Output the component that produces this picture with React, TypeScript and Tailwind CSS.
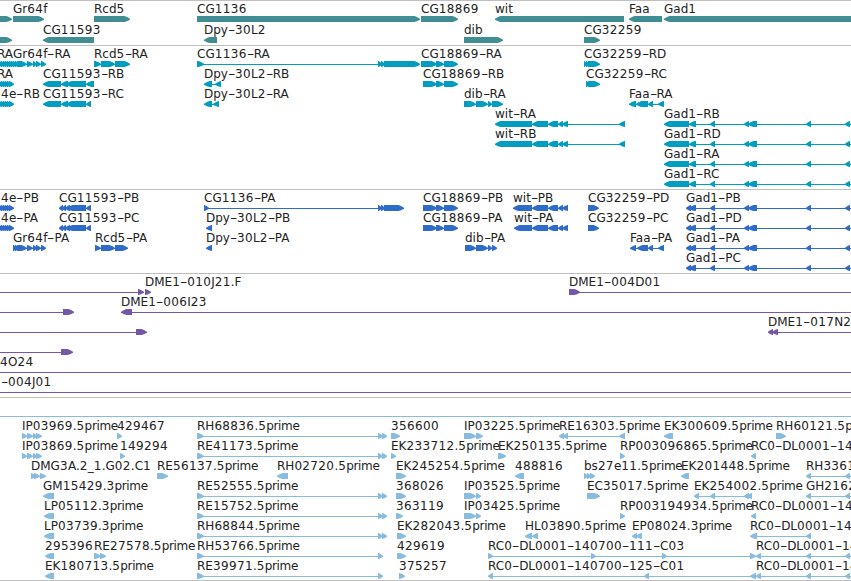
import React from 'react'

// label, x, direction, blocks as [start, end] (joined by a thin line), no line when solo
type Feature = {
  t?: string
  x?: number
  d?: 'r' | 'l'
  b?: number[][]
  line?: number[]
}

const END = [870, 880]
const head = [[-3, 1], [-1, 3], [1, 5], [3, 7], [5, 9], [7, 11], [9, 14]]
const gr64f = [[13, 17], [15, 19], [17, 21], [18, 27], [27, 33], [33, 37], [36, 41], [41, 46]]
const cg18869 = [[423, 437], [436, 444], [444, 447], [445, 458]]
const wit = [[532, 548], [548, 558], [558, 563], [562, 568]]
const gad = [[689, 696], [710, 715], [744, 749], [748, 757], [806, 811], [845, 850], END]
const tail = [[806, 811], [845, 850], END]
const prime = [[197, 204], [378, 383], [382, 387]]

const r = (t: string, x: number, b: number[][]): Feature => ({ t, x, d: 'r', b })
const l = (t: string, x: number, b: number[][]): Feature => ({ t, x, d: 'l', b })

const genes: Feature[][] = [
  [
    r('', 0, [[-10, 12]]), r('Gr64f', 13, [[13, 44]]), r('Rcd5', 94, [[94, 130]]), r('CG1136', 197, [[197, 420]]),
    r('CG18869', 421, [[421, 458]]), l('wit', 495, [[495, 624]]), l('Faa', 629, [[629, 662]]), l('Gad1', 664, [[664, 870]]),
  ],
  [
    r('', 0, [[-10, 12]]), l('CG11593', 43, [[43, 94]]), l('Dpy-30L2', 204, [[204, 217]]),
    r('dib', 464, [[464, 503]]), r('CG32259', 584, [[584, 600]]),
  ],
]

const transcripts: Feature[][] = [
  [
    r('RA', -3, [...head, [11, 15]]), r('Gr64f-RA', 13, gr64f), r('Rcd5-RA', 94, [[94, 101], [101, 115], [115, 130]]),
    r('CG1136-RA', 197, [[197, 204], [378, 382], [381, 385], [384, 420]]),
    r('CG18869-RA', 421, [[421, 437], [436, 444], [444, 447], [445, 458]]),
    r('CG32259-RD', 584, [[584, 587], [586, 590], [588, 600]]),
  ],
  [
    r('RA', -3, head), l('CG11593-RB', 43, [[43, 61], [61, 68], [66, 86], [86, 94]]),
    l('Dpy-30L2-RB', 204, [[204, 212], [215, 221]]), r('CG18869-RB', 423, cg18869),
    r('CG32259-RC', 586, [[586, 590], [588, 600]]),
  ],
  [
    r('4e-RB', 1, head), l('CG11593-RC', 43, [[43, 61], [61, 68], [66, 86], [86, 91]]),
    l('Dpy-30L2-RA', 204, [[204, 212], [213, 219]]),
    r('dib-RA', 464, [[464, 476], [476, 488], [488, 492], [492, 503]]),
    l('Faa-RA', 629, [[629, 636], [636, 648], [648, 653], [658, 664]]),
  ],
  [l('wit-RA', 495, [[495, 532], ...wit, [619, 625]]), l('Gad1-RB', 664, [[664, 689], ...gad])],
  [l('wit-RB', 495, [[495, 532], ...wit, [619, 625]]), l('Gad1-RD', 664, [[664, 689], ...gad])],
  [l('Gad1-RA', 664, [[664, 689], ...gad])],
  [l('Gad1-RC', 664, [[664, 689], ...gad])],
]

const proteins: Feature[][] = [
  [
    r('4e-PB', 1, head), l('CG11593-PB', 59, [[59, 63], [62, 66], [65, 70], [67, 86], [86, 91]]),
    r('CG1136-PA', 204, [[204, 209], [378, 382], [381, 385], [384, 404]]), r('CG18869-PB', 423, cg18869),
    l('wit-PB', 513, [[513, 532], ...wit]), r('CG32259-PD', 588, [[588, 599]]), l('Gad1-PB', 686, [[686, 691], ...gad]),
  ],
  [
    r('4e-PA', 1, head), l('CG11593-PC', 59, [[59, 63], [62, 66], [65, 70], [67, 86], [86, 91]]),
    l('Dpy-30L2-PB', 206, [[206, 212]]), r('CG18869-PA', 423, cg18869),
    l('wit-PA', 514, [[514, 532], ...wit]), r('CG32259-PC', 588, [[588, 599]]), l('Gad1-PD', 686, [[686, 691], ...gad]),
  ],
  [
    r('Gr64f-PA', 13, gr64f), r('Rcd5-PA', 95, [[95, 101], [101, 115], [115, 128]]), l('Dpy-30L2-PA', 206, [[206, 212]]),
    r('dib-PA', 465, [[465, 476], [476, 488], [488, 492], [492, 497]]),
    l('Faa-PA', 630, [[630, 636], [637, 648], [648, 653], [658, 664]]), l('Gad1-PA', 686, [[686, 691], ...gad]),
  ],
  [l('Gad1-PC', 686, [[686, 691], ...gad])],
]

const clones: Feature[][] = [
  [
    { d: 'r', b: [[138, 144]], line: [0, 144] }, r('DME1-010J21.F', 145, [[145, 151]]),
    { t: 'DME1-004D01', x: 569, d: 'r', b: [[569, 580]], line: [569, 851] },
  ],
  [
    { d: 'r', b: [[63, 74]], line: [0, 70] },
    { t: 'DME1-006I23', x: 121, d: 'l', b: [[121, 132]], line: [125, 851] },
  ],
  [
    { d: 'r', b: [[136, 147]], line: [0, 142] },
    { t: 'DME1-017N2', x: 768, d: 'l', b: [[768, 773], [772, 778]], line: [770, 851] },
  ],
  [{ d: 'r', b: [[61, 73]], line: [0, 70] }],
  [{ t: '4O24', x: 0, line: [0, 851] }],
  [{ t: '-004J01', x: 1, line: [0, 851] }],
]

const ests: Feature[][] = [
  [{ line: [0, 851] }],
  [
    r('IP03969.5prime', 22, [[22, 27], [27, 33], [33, 37], [36, 42]]), r('429467', 117, [[117, 122]]),
    r('RH68836.5prime', 197, prime), r('356600', 391, [[391, 400]]),
    r('IP03225.5prime', 464, [[464, 476], [476, 483]]), l('RE16303.5prime', 559, [[559, 564], [563, 568], [619, 625]]),
    l('EK300609.5prime', 664, [[664, 673]]), r('RH60121.5p', 776, [[776, 786]]),
  ],
  [
    r('IP03869.5prime', 22, [[22, 27], [27, 33], [33, 37], [36, 42]]), r('149294', 120, [[120, 125]]),
    r('RE41173.5prime', 197, prime), r('EK233712.5prime', 391, [[391, 396]]),
    r('EK250135.5prime', 498, [[498, 506]]), r('RP003096865.5prime', 620, [[620, 625]]),
    l('RC0-DL0001-14', 751, [[751, 756]]),
  ],
  [
    r('DMG3A.2_1.G02.C1', 31, [[31, 36], [34, 40], [40, 46]]), r('RE56137.5prime', 157, [[157, 168]]),
    l('RH02720.5prime', 277, [[277, 288]]), r('EK245254.5prime', 396, [[396, 406]]),
    l('488816', 515, [[515, 524]]), r('bs27e11.5prime', 584, [[584, 588], [587, 591], [590, 595]]),
    l('EK201448.5prime', 681, [[681, 689]]), l('RH3361', 806, tail),
  ],
  [
    l('GM15429.3prime', 43, [[43, 54]]), r('RE52555.5prime', 197, prime), r('368026', 396, [[396, 406]]),
    r('IP03525.5prime', 464, [[464, 476], [476, 481]]), r('EC35017.5prime', 587, [[587, 600]]),
    l('EK254002.5prime', 694, [[694, 699], [710, 715], [744, 749], [747, 752]]), l('GH2162', 806, tail),
  ],
  [
    l('LP05112.3prime', 44, [[44, 54]]), r('RE15752.5prime', 197, prime), r('363119', 396, [[396, 403]]),
    r('IP03425.5prime', 464, [[464, 476], [476, 481]]), r('RP003194934.5prime', 620, [[620, 625]]),
    l('RC0-DL0001-14', 751, [[751, 756]]),
  ],
  [
    l('LP03739.3prime', 44, [[44, 54]]), r('RH68844.5prime', 197, prime), r('EK282043.5prime', 397, [[397, 406]]),
    l('HL03890.5prime', 525, [[525, 532], [532, 538]]), l('EP08024.3prime', 632, [[632, 637], [636, 642]]),
    l('RC0-DL0001-14', 750, [[750, 757], [806, 811]]),
  ],
  [
    l('295396', 45, [[45, 54]]), r('RE27578.5prime', 94, [[94, 101], [100, 106]]),
    r('RH53766.5prime', 197, [[197, 204], [378, 383]]), r('429619', 397, [[397, 406]]),
    r('RC0-DL0001-140700-111-C03', 488, [[488, 493], [591, 596], [662, 667], [750, 756]]),
    l('RC0-DL0001-14', 756, [[756, 761], ...tail]),
  ],
  [
    l('EK180713.5prime', 45, [[45, 54]]), r('RE39971.5prime', 197, [[197, 204], [378, 383]]),
    r('375257', 399, [[399, 405]]), l('RC0-DL0001-140700-125-C01', 488, [[488, 493], [644, 649], [750, 756]]),
    l('RC0-DL0001-14', 756, [[756, 761], ...tail]),
  ],
]

const arrow = (a: number, b: number, d?: string) => {
  const tip = Math.min(6, b - a)
  // body edge, shoulder and blunt tip
  const [base, edge, dir] = d === 'l' ? [b, a, 1] : [a, b, -1]
  const neck = edge + dir * (tip - 0.5)
  const mid = edge + (dir * tip) / 2
  return `${base},3 ${neck},3 ${mid},4 ${edge},5.7 ${edge},6.7 ${mid},8.3 ${neck},9 ${base},9`
}

const Label = ({ text, x }: { text: string; x: number }) => (
  <span className="absolute top-0 leading-3 whitespace-pre" style={{ left: x }}>
    {text.split(/(\d+|-|prime)/).map((s, i) => {
      if (s === '-') return <span key={i} className="inline-block w-[7px] origin-left scale-x-[1.7]">-</span>
      if (s === 'prime') return <span key={i} className="tracking-[-0.35px]">{s}</span>
      if (/\d/.test(s)) return <span key={i} className="tracking-[0.365px]">{s}</span>
      return s
    })}
  </span>
)

const Track = ({ rows, className, rowClass = 'h-5' }: { rows: Feature[][]; className: string; rowClass?: string }) => (
  <section className={`border-t border-[#bfbfbf] pt-0.5 ${className}`}>
    {rows.map((row, i) => (
      <div key={i} className={`relative pt-2.5 ${rowClass}`}>
        <svg width="851" height="10" className="block overflow-hidden" fill="currentColor">
          {row.map((f, j) => {
            const b = f.b || []
            const line = f.line || (b.length > 1 ? [b[0][0] + 2, b[b.length - 1][1] - 2] : null)
            return (
              <g key={j}>
                {line && <rect x={line[0]} y="6" width={line[1] - line[0]} height="1" />}
                {b.map(([s, e], k) => <polygon key={k} points={arrow(s, e, f.d)} />)}
              </g>
            )
          })}
        </svg>
        <div className="text-[#222]">
          {row.map((f, j) => f.t && <Label key={j} text={f.t} x={f.x || 0} />)}
        </div>
      </div>
    ))}
  </section>
)

const App = () => {
  return (
    <main className="w-[851px] h-[581px] overflow-hidden bg-white text-[12px] font-['DejaVu_Sans',sans-serif]">
      <Track rows={genes} className="text-[#408e93]" rowClass="h-[21px]" />
      <Track rows={transcripts} className="pb-px text-[#009dc0]" />
      <Track rows={proteins} className="pb-px text-[#2f6bc9]" />
      <Track rows={clones} className="pb-px text-[#7457a6]" />
      <Track rows={ests} className="border-b text-[#87bcde]" />
    </main>
  )
}

export default App
